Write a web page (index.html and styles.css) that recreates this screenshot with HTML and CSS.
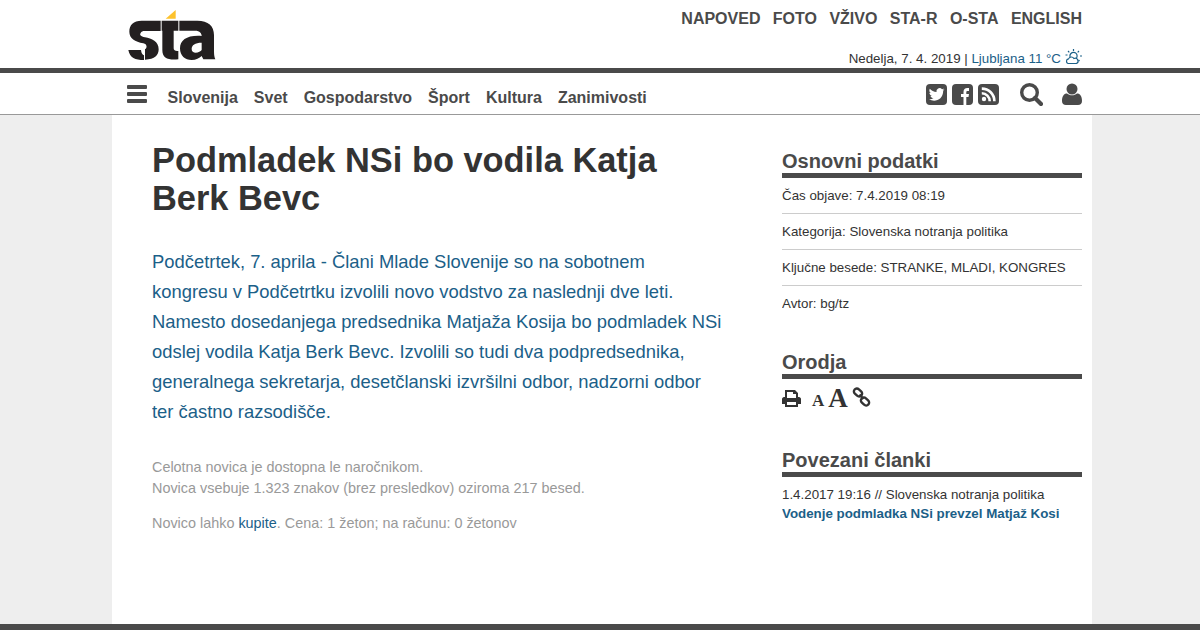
FILE: index.html
```html
<!DOCTYPE html>
<html lang="sl">
<head>
<meta charset="utf-8">
<title>Podmladek NSi bo vodila Katja Berk Bevc</title>
<link rel="stylesheet" href="styles.css">
</head>
<body>
<header class="top">
  <div class="wrap top-in">
    <a class="logo" href="#" aria-label="sta">
      <svg width="88" height="52" viewBox="54 30 264 156">
        <path fill="#fdc22d" d="M167 56 L197 56 L197 30 Z"/>
        <path fill="#231f20" d="M152 62 L95 62 C70 62 58 75 58 95 C58 115 75 125 100 130 C112 132 112 145 105 148 L105 179 C135 179 146 165 146 148 C146 125 125 115 105 112 C92 110 88 104 92 99 C94 95 98 93 104 93 L152 93 Z"/>
        <path fill="#231f20" d="M55 150 L93 150 C94 160 98 165 102 166 L102 180 C75 180 60 175 55 150 Z"/>
        <path fill="#231f20" d="M155 62 L205 62 L205 92 L191 92 L191 145 C191 152 197 154 205 153 L205 178 C175 181 157 175 157 150 L157 92 L155 92 Z"/>
        <path fill="#231f20" fill-rule="evenodd" d="M208 62 L262 62 C295 62 312 78 312 105 L312 150 C312 165 313 170 316 178 L280 178 L275 168 C268 175 258 180 245 180 C225 180 210 168 210 145 C210 120 232 105 275 108 C275 100 270 92 255 92 L208 92 Z M275 128 C255 128 245 135 245 147 C245 155 250 158 257 158 C265 158 272 154 275 150 Z"/>
      </svg>
    </a>
    <div class="top-right text-layer">
      <nav class="top-links">
        <a href="#">NAPOVED</a><a href="#">FOTO</a><a href="#">VŽIVO</a><a href="#">STA-R</a><a href="#">O-STA</a><a href="#">ENGLISH</a>
      </nav>
      <div class="date"><span>Nedelja, 7. 4. 2019 | <a href="#">Ljubljana 11 °C</a></span>
        <svg class="wx" width="17" height="16" viewBox="0 0 17 16" fill="none" stroke="#1b6088" stroke-width="1.2">
          <circle cx="8.5" cy="7" r="3.6"/>
          <path d="M8.5 0v2M3 2l1.3 1.3M14 2l-1.3 1.3M15 7h2M14.5 12l-1-1M.5 6h2"/>
          <path fill="#fff" d="M3 14.5a2.4 2.4 0 0 1 .5-4.6 3 3 0 0 1 5.4-.4 2.6 2.6 0 0 1 2.6 5z"/>
        </svg>
      </div>
    </div>
  </div>
</header>
<nav class="mainnav">
  <div class="wrap nav-in">
    <svg class="burger" width="20" height="18" viewBox="0 0 20 18" fill="#4a4a4a"><rect width="20" height="4" rx="1"/><rect y="7" width="20" height="4" rx="1"/><rect y="14" width="20" height="4" rx="1"/></svg>
    <div class="nav-links text-layer">
      <a href="#">Slovenija</a><a href="#">Svet</a><a href="#">Gospodarstvo</a><a href="#">Šport</a><a href="#">Kultura</a><a href="#">Zanimivosti</a>
    </div>
    <div class="nav-icons">
      <span class="social">
        <svg width="21" height="21" viewBox="0 0 21 21"><rect width="21" height="21" rx="4" fill="#4a4a4a"/><path fill="#fff" d="M18.500 5.600c-.6.300-1.200.5-1.900.6.700-.4 1.200-1 1.400-1.800-.6.400-1.300.6-2 .8a3.200 3.200 0 0 0-5.500 2.900C7.800 8 5.400 6.700 3.800 4.800c-.9 1.500-.4 3.400 1 4.300-.5 0-1-.2-1.400-.4 0 1.500 1.100 2.900 2.600 3.200-.5.100-1 .1-1.500 0 .4 1.300 1.600 2.200 3 2.200-1.300 1-2.900 1.400-4.500 1.200 5.700 3.300 14.200.7 14.200-8.500.6-.5 1.200-1.100 1.300-1.200z"/></svg>
        <svg width="21" height="21" viewBox="0 0 21 21"><rect width="21" height="21" rx="4" fill="#4a4a4a"/><path fill="#fff" d="M11.500 21v-8H9V10h2.500V8c0-2.700 1.500-4 3.800-4H17v3h-1.300c-1 0-1.400.5-1.400 1.400V10H17l-.5 3h-2.200v8z"/></svg>
        <svg width="21" height="21" viewBox="0 0 21 21"><rect width="21" height="21" rx="4" fill="#4a4a4a"/><circle cx="6" cy="15" r="2.200" fill="#fff"/><path fill="none" stroke="#fff" stroke-width="2.600" d="M3.800 9.300a7.900 7.900 0 0 1 7.900 7.900M3.800 4.600a12.600 12.600 0 0 1 12.600 12.600"/></svg>
      </span>
      <svg class="search" width="23" height="23" viewBox="0 0 23 23" fill="none" stroke="#4a4a4a"><circle cx="9.500" cy="9.500" r="7.800" stroke-width="3.400"/><path d="M15 15l6 6" stroke-width="4.200" stroke-linecap="round"/></svg>
      <svg class="user" width="20" height="22" viewBox="0 0 20 22" fill="#4a4a4a"><circle cx="10" cy="6" r="5.500"/><path d="M0 18c0-5 2-7.500 5-7.500 1.500 1.200 3 1.800 5 1.800s3.500-.6 5-1.800c3 0 5 2.500 5 7.500 0 2.500-1.500 4-4 4H4c-2.500 0-4-1.500-4-4z"/></svg>
    </div>
  </div>
</nav>
<main class="page">
  <article class="article text-layer">
    <h1>Podmladek NSi bo vodila Katja Berk Bevc</h1>
    <p class="lead">Podčetrtek, 7. aprila - Člani Mlade Slovenije so na sobotnem kongresu v Podčetrtku izvolili novo vodstvo za naslednji dve leti. Namesto dosedanjega predsednika Matjaža Kosija bo podmladek NSi odslej vodila Katja Berk Bevc. Izvolili so tudi dva podpredsednika, generalnega sekretarja, desetčlanski izvršilni odbor, nadzorni odbor ter častno razsodišče.</p>
    <p class="note">Celotna novica je dostopna le naročnikom.<br>Novica vsebuje 1.323 znakov (brez presledkov) oziroma 217 besed.</p>
    <p class="note buy">Novico lahko <a href="#">kupite</a>. Cena: 1 žeton; na računu: 0 žetonov</p>
  </article>
  <aside class="side text-layer">
    <section class="box">
      <h2>Osnovni podatki</h2>
      <ul class="facts">
        <li>Čas objave: 7.4.2019 08:19</li>
        <li>Kategorija: Slovenska notranja politika</li>
        <li>Ključne besede: STRANKE, MLADI, KONGRES</li>
        <li>Avtor: bg/tz</li>
      </ul>
    </section>
    <section class="box tools-box">
      <h2>Orodja</h2>
      <div class="tools">
        <svg width="19" height="17" viewBox="0 0 19 17" fill="#333"><path fill-rule="evenodd" d="M3 0h10l3 3v4h1c1 0 2 1 2 2v5h-3v3H3v-3H0V9c0-1 1-2 2-2h1zM5 2v6h9V4h-3V2zM5 12v3h9v-3z"/></svg>
        <span class="a-small">A</span><span class="a-big">A</span>
        <svg class="link" width="19" height="20" viewBox="0 0 19 20" fill="none" stroke="#333" stroke-width="2.400"><rect x="1.500" y="2.500" width="9" height="6" rx="3" transform="rotate(42 6 5.500)"/><rect x="8.500" y="11.500" width="9" height="6" rx="3" transform="rotate(42 13 14.500)"/><path d="M7.500 7.500l4 4.500"/></svg>
      </div>
    </section>
    <section class="box rel-box">
      <h2>Povezani članki</h2>
      <p class="rel-meta">1.4.2017 19:16 // Slovenska notranja politika</p>
      <a class="rel-link" href="#">Vodenje podmladka NSi prevzel Matjaž Kosi</a>
    </section>
  </aside>
</main>
<div class="foot"></div>
</body>
</html>
```
FILE: styles.css
```css
* { box-sizing: border-box; }
html, body { margin: 0; height: 630px; overflow: hidden; }
body {
  background: #eee;
  font-family: "Liberation Sans", Arial, sans-serif;
  color: #333;
  display: flex;
  flex-direction: column;
}
a { text-decoration: none; color: inherit; }
.text-layer { opacity: 0.999; }
.wrap { width: 955px; margin-left: 127px; }
.top { background: #fff; height: 73px; border-bottom: 5px solid #4a4a4a; }
.top-in { display: flex; justify-content: space-between; height: 68px; }
.logo { display: block; padding: 10px 0 0 1px; height: 68px; }
.logo svg { display: block; }
.top-right { display: flex; flex-direction: column; align-items: flex-end; justify-content: space-between; }
.top-links { display: flex; gap: 12.4px; padding-top: 10px; font-size: 16px; line-height: 18px; font-weight: bold; color: #4a4a4a; }
.date { font-size: 13.33px; line-height: 16px; padding-bottom: 1px; display: flex; gap: 4px; }
.date a { color: #1b6088; }
.wx { margin-top: -2px; }
.mainnav { background: #fff; height: 42px; border-bottom: 1px solid #999; flex: none; }
.nav-in { display: flex; align-items: center; height: 41px; }
.burger { margin-top: 1px; }
.nav-links { display: flex; gap: 16px; margin-left: 20.6px; padding-top: 9px; font-size: 16px; line-height: 18px; font-weight: bold; color: #4a4a4a; }
.nav-icons { margin-left: auto; display: flex; align-items: center; padding-top: 1px; }
.social { display: flex; gap: 5px; }
.social svg, .search, .user { display: block; }
.search { margin-left: 21px; }
.user { margin-left: 19px; }
.page {
  flex: 1;
  width: 980px;
  margin-left: 112px;
  background: #fff;
  padding: 26px 10px 0 40px;
  display: flex;
  justify-content: space-between;
}
.article { width: 570px; }
h1 { margin: 0; font-size: 34.4px; line-height: 38px; font-weight: bold; color: #333; }
.lead { margin: 30px 0 0; font-size: 18.4px; line-height: 30px; color: #1b6088; }
.note { margin: 30px 0 0; font-size: 14.4px; line-height: 21px; color: #999; }
.note.buy { margin-top: 14px; }
.note a { color: #1b6088; }
.side { width: 300px; padding-top: 9px; }
h2 { margin: 0; font-size: 20px; line-height: 23px; font-weight: bold; color: #4a4a4a; border-bottom: 5px solid #4a4a4a; }
.facts { list-style: none; margin: 0; padding: 0; font-size: 13.33px; }
.facts li { height: 36px; line-height: 35px; border-bottom: 1px solid #ccc; }
.facts li:last-child { border-bottom: 0; }
.tools-box { margin-top: 29px; }
.tools { display: flex; align-items: flex-end; height: 30px; padding-bottom: 2px; color: #333; font-family: "Liberation Serif", serif; font-weight: bold; }
.tools svg { display: block; }
.a-small { font-size: 17px; line-height: 16px; margin-left: 11px; margin-bottom: -2px; }
.a-big { font-size: 27px; line-height: 22px; margin-left: 4px; margin-bottom: -2px; }
.tools .link { margin-left: 4px; margin-bottom: 0; }
.rel-box { margin-top: 40px; }
.rel-meta { margin: 8px 0 0; font-size: 13.33px; line-height: 19px; }
.rel-link { display: block; font-size: 13.33px; line-height: 19px; font-weight: bold; color: #1b6088; }
.foot { height: 6px; background: #4a4a4a; flex: none; }
```
